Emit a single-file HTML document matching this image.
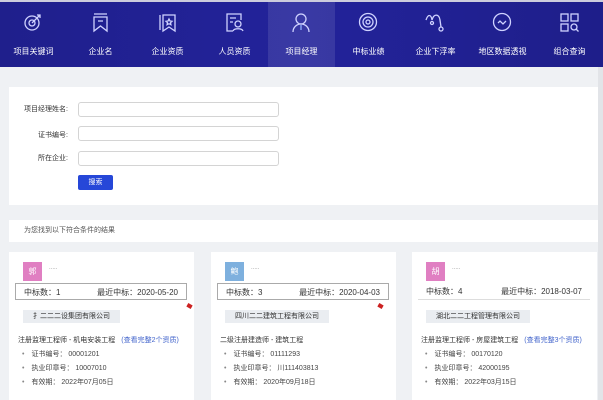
<!DOCTYPE html>
<html><head><meta charset="utf-8"><style>
*{margin:0;padding:0;box-sizing:border-box}
body{width:603px;height:400px;overflow:hidden;background:#eff1f4;font-family:"Liberation Sans","Noto Sans CJK SC",sans-serif;position:relative;color:#333}
.nav{position:absolute;left:0;top:0;width:603px;height:67px;background:linear-gradient(90deg,#1f1f8c,#23239a 50%,#1e1e8a);border-top:2px solid #ccd}
.it{position:absolute;top:0;width:67px;height:65px;text-align:center;color:#fff;font-size:8px}
.it svg{position:absolute;left:23px;top:10px}
.it span{position:absolute;left:0;right:0;top:44px}
.act{background:rgba(255,255,255,.1)}
.panel{position:absolute;background:#fff}
.lab{position:absolute;font-size:7px;color:#333;text-align:right;width:60px;left:8px}
.inp{position:absolute;left:78px;width:201px;height:15px;border:1px solid #d4d4d4;border-radius:3px;background:#fff}
.btn{position:absolute;left:78px;top:175px;width:35px;height:15px;background:#2647d8;color:#fff;font-size:7px;text-align:center;line-height:15px;border-radius:2px}
.card{position:absolute;top:252px;width:185px;height:148px;background:#fff;font-size:7px}
.av{position:absolute;left:14px;top:10px;width:19px;height:19px;color:#fff;text-align:center;line-height:19px;font-size:8px}
.row{position:absolute;left:6px;top:31px;width:172px;height:17px;line-height:17px;padding:0 8px;font-size:8px}
.row.b{border:1px solid #aaa}
.row .r{float:right}
.co{position:absolute;left:14px;top:58px;height:13px;line-height:13px;background:#eaedf1;padding:0 10px;font-size:7px}
.q{position:absolute;left:9px;top:83px;font-size:7px;color:#333;white-space:nowrap}
.q i{font-style:normal;color:#4466cc;margin-left:6px}
.li{position:absolute;left:13px;font-size:7px;color:#444;white-space:nowrap}
.li:before{content:"•";margin-right:7px;color:#888}
.mk{position:absolute;width:5px;height:4px;background:#c22;transform:rotate(30deg)}
</style></head><body>
<div class="nav">
<div class="it" style="left:0"><svg width="21" height="21" viewBox="0 0 21 21" fill="none" stroke="#cfd2ff" stroke-width="1.3"><circle cx="9" cy="11" r="7"/><circle cx="9" cy="11" r="3"/><path d="M9 11L17 3M14 3h3v3"/></svg><span>项目关键词</span></div>
<div class="it" style="left:67px"><svg width="21" height="21" viewBox="0 0 21 21" fill="none" stroke="#cfd2ff" stroke-width="1.3"><path d="M4 2h13M4 5h13v14l-6.5-5L4 19z M8 9h5"/></svg><span>企业名</span></div>
<div class="it" style="left:134px"><svg width="21" height="21" viewBox="0 0 21 21" fill="none" stroke="#cfd2ff" stroke-width="1.3"><path d="M3 3v15M6 3h12v16l-6-4-6 4z"/><path d="M12 7l1 2 2 .3-1.5 1.4.4 2-1.9-1-1.9 1 .4-2L9 9.3l2-.3z"/></svg><span>企业资质</span></div>
<div class="it" style="left:201px"><svg width="21" height="21" viewBox="0 0 21 21" fill="none" stroke="#cfd2ff" stroke-width="1.3"><path d="M17 8V2H3v17h6M6 6h6M6 10h3"/><circle cx="14" cy="12" r="3"/><path d="M9 19c1-3 9-3 10 0"/></svg><span>人员资质</span></div>
<div class="it act" style="left:268px"><svg width="21" height="21" viewBox="0 0 21 21" fill="none" stroke="#cfd2ff" stroke-width="1.3"><circle cx="10" cy="7" r="5"/><path d="M2 20c0-5 4-8 8-8s8 3 8 8"/><path d="M10 13v5" stroke="#8fb0ff"/></svg><span>项目经理</span></div>
<div class="it" style="left:335px"><svg width="21" height="21" viewBox="0 0 21 21" fill="none" stroke="#cfd2ff" stroke-width="1.3"><circle cx="10" cy="10" r="8.5"/><circle cx="10" cy="10" r="5"/><circle cx="10" cy="10" r="2"/></svg><span>中标业绩</span></div>
<div class="it" style="left:402px"><svg width="21" height="21" viewBox="0 0 21 21" fill="none" stroke="#cfd2ff" stroke-width="1.3"><path d="M1 8C3 2 6 2 7 8M7 8C9 1 14 2 15 8l1 7"/><circle cx="7" cy="11" r="1.5"/><circle cx="16" cy="17" r="2"/></svg><span>企业下浮率</span></div>
<div class="it" style="left:469px"><svg width="21" height="21" viewBox="0 0 21 21" fill="none" stroke="#cfd2ff" stroke-width="1.3"><circle cx="10" cy="10" r="8.5"/><path d="M6 11l2-2 3 3 3-3"/></svg><span>地区数据透视</span></div>
<div class="it" style="left:536px"><svg width="21" height="21" viewBox="0 0 21 21" fill="none" stroke="#cfd2ff" stroke-width="1.3"><rect x="2" y="2" width="7" height="7"/><rect x="12" y="2" width="7" height="7"/><rect x="2" y="12" width="7" height="7"/><circle cx="15" cy="15" r="3"/><path d="M17 17l2.5 2.5"/></svg><span>组合查询</span></div>
</div>
<div style="position:absolute;left:598px;top:67px;width:5px;height:333px;background:#e2e4e8"></div>
<div class="panel" style="left:9px;top:87px;width:589px;height:118px"></div>
<div class="lab" style="top:104px">项目经理姓名:</div><div class="inp" style="top:102px"></div>
<div class="lab" style="top:130px">证书编号:</div><div class="inp" style="top:126px"></div>
<div class="lab" style="top:153px">所在企业:</div><div class="inp" style="top:151px"></div>
<div class="btn">搜索</div>
<div class="panel" style="left:9px;top:220px;width:589px;height:22px;font-size:7px;color:#555;line-height:22px;padding-left:15px">为您找到以下符合条件的结果</div>

<div class="card" style="left:9px">
<div class="av" style="background:#e07fc2">郭</div><div style="position:absolute;left:40px;top:13px;font-size:6px;color:#999">.....</div>
<div class="row b">中标数：1<span class="r">最近中标：2020-05-20</span></div>
<div class="co">扌二二二设集团有限公司</div>
<div class="q">注册监理工程师 - 机电安装工程<i>(查看完整2个资质)</i></div>
<div class="li" style="top:97px">证书编号： 00001201</div>
<div class="li" style="top:111px">执业印章号： 10007010</div>
<div class="li" style="top:125px">有效期： 2022年07月05日</div>
</div>
<div class="mk" style="left:187px;top:304px"></div>
<div class="card" style="left:211px">
<div class="av" style="background:#7eb0de">鲍</div><div style="position:absolute;left:40px;top:13px;font-size:6px;color:#999">.....</div>
<div class="row b">中标数：3<span class="r">最近中标：2020-04-03</span></div>
<div class="co">四川二二建筑工程有限公司</div>
<div class="q">二级注册建造师 - 建筑工程</div>
<div class="li" style="top:97px">证书编号： 01111293</div>
<div class="li" style="top:111px">执业印章号： 川111403813</div>
<div class="li" style="top:125px">有效期： 2020年09月18日</div>
</div>
<div class="mk" style="left:378px;top:304px"></div>
<div class="card" style="left:412px">
<div class="av" style="background:#e07fc2">胡</div><div style="position:absolute;left:40px;top:13px;font-size:6px;color:#999">.....</div>
<div class="row" style="border-bottom:1px solid #ddd">中标数：4<span class="r">最近中标：2018-03-07</span></div>
<div class="co">湖北二二工程管理有限公司</div>
<div class="q">注册监理工程师 - 房屋建筑工程<i>(查看完整3个资质)</i></div>
<div class="li" style="top:97px">证书编号： 00170120</div>
<div class="li" style="top:111px">执业印章号： 42000195</div>
<div class="li" style="top:125px">有效期： 2022年03月15日</div>
</div>
</body></html>
